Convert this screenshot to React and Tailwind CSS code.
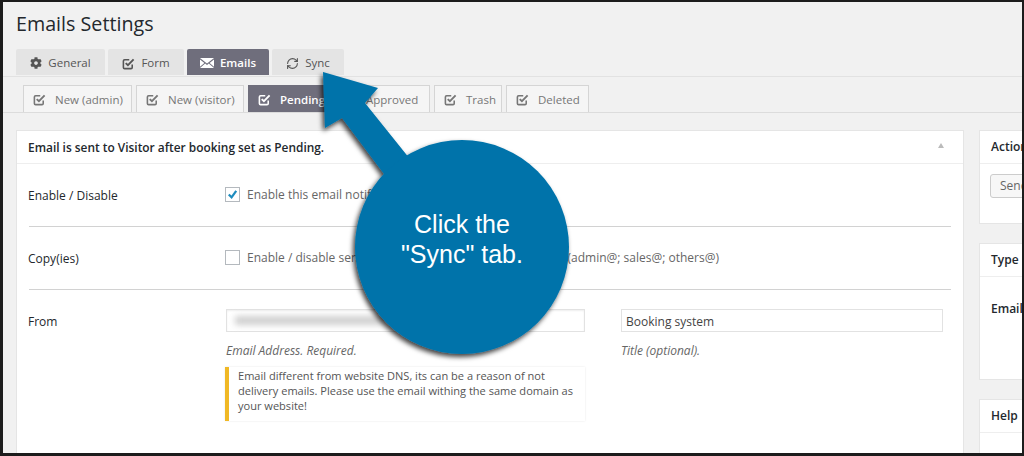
import React from "react";
import { RefreshCw } from "lucide-react";
import { FaCog } from "react-icons/fa";

// glyphicon style "check" box
const CheckIcon = ({ className = "" }) => (
  <svg viewBox="0 0 14 14" className={`w-[13px] h-[13px] ${className}`} fill="none" stroke="currentColor">
    <path d="M11 8v3.2a1.3 1.3 0 0 1-1.3 1.3H2.8a1.3 1.3 0 0 1-1.3-1.3V4.3A1.3 1.3 0 0 1 2.8 3h5" strokeWidth="1.7" />
    <path d="M4 6.5l2.4 2.4L12.5 2.5" strokeWidth="2" />
  </svg>
);

const MailIcon = () => (
  <svg viewBox="0 0 14 10" className="w-[14px] h-[10px]" fill="currentColor">
    <path d="M0 0h14L7 5.6z" />
    <path d="M0 1.4v7.4l4.4-3.9zM14 1.4v7.4L9.6 4.9zM0 10h14L8.8 5.6 7 7 5.2 5.6z" />
  </svg>
);

const mainTabs = [
  { label: "General", icon: <FaCog className="w-[12px] h-[12px]" />, w: "w-[89px]" },
  { label: "Form", icon: <CheckIcon />, w: "w-[76px]" },
  { label: "Emails", icon: <MailIcon />, w: "w-[82px]", active: true },
  { label: "Sync", icon: <RefreshCw className="w-[13px] h-[13px]" strokeWidth={2} />, w: "w-[72px]" },
];

const subTabs = [
  { label: "New (admin)", w: "w-[109px]" },
  { label: "New (visitor)", w: "w-[108px]" },
  { label: "Pending", w: "w-[82px]", active: true },
  { label: "Approved", w: "w-[96px]" },
  { label: "Trash", w: "w-[68px]" },
  { label: "Deleted", w: "w-[83px]" },
];

const Divider = () => <div className="h-px bg-[#d2d2d2] mx-3"></div>;

export default function App() {
  return (
    <div className="relative w-[1024px] h-[456px] overflow-hidden bg-[#f1f1f1] border-t-2 border-l-[3px] border-r-2 border-b-[3px] border-[#1c1c1c] font-['Open_Sans',sans-serif] text-[#444]">
      <h1 className="ml-[13px] pt-[9px] h-[47px] text-[19.7px] leading-[26px] text-[#23282d]">Emails Settings</h1>

      {/* main tabs */}
      <div className="flex ml-[13px] h-[26px] gap-[3px] items-stretch">
        {mainTabs.map((tab) => (
          <div
            key={tab.label}
            className={`${tab.w} flex items-center justify-center gap-[6px] pt-[2px] text-[11.5px] rounded-t-[2px] ${
              tab.active ? "bg-[#6f6e7c] text-white font-semibold" : "bg-[#e4e4e4] text-[#555]"
            }`}
          >
            {tab.icon}
            {tab.label}
          </div>
        ))}
      </div>
      <div className="h-px mt-px bg-[#e2e2e2]"></div>

      {/* sub tabs */}
      <div className="flex pl-5 mt-2 h-[28px] gap-[4px] border-b border-[#dcdcdc]">
        {subTabs.map((tab) => (
          <div
            key={tab.label}
            className={`${tab.w} flex items-center gap-[9px] pl-[9px] pt-px text-[11.5px] border-t border-x ${
              tab.active
                ? "bg-[#6f6e7c] border-[#6f6e7c] text-white font-semibold"
                : "bg-[#f5f5f5] border-[#d5d5d5] text-[#777]"
            }`}
          >
            <CheckIcon />
            {tab.label}
          </div>
        ))}
      </div>

      <div className="flex mt-[17px] ml-[13px] gap-[15px] items-start">
        {/* main panel */}
        <div className="w-[948px] h-[330px] shrink-0 bg-white border border-[#e5e5e5]">
          <div className="relative h-[33px] flex items-center pt-px px-[11px] border-b border-[#eee] text-[11.9px] font-semibold text-[#23282d]">
            Email is sent to Visitor after booking set as Pending.
            <span className="absolute right-[19px] top-[12px] w-0 h-0 border-x-[3px] border-x-transparent border-b-[5px] border-b-[#bbb]"></span>
          </div>

          <div className="flex items-center h-[62px] px-[11px] text-[12px]">
            <div className="w-[197px] pt-[2px] text-[#23282d]">Enable / Disable</div>
            <div className="flex items-center gap-[7px] -mt-[1px] text-[#666]">
              <div className="w-[15px] h-[15px] -mt-px flex items-center justify-center border border-[#b4b9be] bg-white">
                <svg viewBox="0 0 14 14" className="w-[13px] h-[13px]" fill="none" stroke="#1e8cbe" strokeWidth="2.4">
                  <path d="M3 7l3 3 5-7" />
                </svg>
              </div>
              Enable this email notification
            </div>
          </div>
          <Divider />

          <div className="flex items-center h-[62px] px-[11px] text-[12px]">
            <div className="w-[197px] pt-[2px] text-[#23282d]">Copy(ies)</div>
            <div className="flex items-center gap-[7px] -mt-[1px] text-[#666]">
              <div className="w-[15px] h-[15px] -mt-px border border-[#b4b9be] bg-white"></div>
              Enable / disable sending copy of this email to other mails (admin@; sales@; others@)
            </div>
          </div>
          <Divider />

          <div className="flex px-[11px] pt-[19px] text-[12px]">
            <div className="w-[198px] pt-[4px] text-[#23282d]">From</div>
            <div className="w-[359px]">
              <div className="h-[23px] flex items-center px-2 bg-white border border-[#e2e2e2] shadow-[inset_0_1px_2px_rgba(0,0,0,0.07)]">
                <div className="w-[150px] h-[9px] bg-[#cfcfcf] blur-[3px]"></div>
              </div>
              <div className="mt-[11px] italic text-[12px] leading-[16px] text-[#666]">Email Address. Required.</div>
              <div className="-ml-px mt-2 h-[54px] pl-[9px] pr-1 py-[1px] border-l-4 border-[#f0b825] shadow-[0_0_2px_rgba(0,0,0,0.1)] text-[11.05px] leading-[15px] text-[#555]">
                Email different from website DNS, its can be a reason of not delivery emails. Please use the email withing the same domain as your website!
              </div>
            </div>
            <div className="w-[322px] ml-9">
              <div className="h-[23px] flex items-center px-[4px] pt-[2px] bg-white border border-[#e2e2e2] text-[#444]">Booking system</div>
              <div className="mt-[11px] italic text-[12px] leading-[16px] text-[#666]">Title (optional).</div>
            </div>
          </div>
        </div>

        {/* side column */}
        <div className="w-[120px] shrink-0 flex flex-col gap-[19px] text-[12px] text-[#23282d]">
          <div className="h-[94px] bg-white border border-[#e5e5e5]">
            <div className="h-[33px] flex items-center px-[11px] border-b border-[#eee] font-semibold">Actions</div>
            <div className="ml-[10px] mt-[10px] w-[80px] h-[24px] flex items-center px-[9px] text-[#666] bg-[#f7f7f7] border border-[#ccc] rounded-[3px]">Send test</div>
          </div>
          <div className="h-[137px] bg-white border border-[#e5e5e5]">
            <div className="h-[33px] flex items-center px-[11px] border-b border-[#eee] font-semibold">Type</div>
            <div className="px-[11px] pt-[23px] font-semibold">Email</div>
          </div>
          <div className="h-[60px] bg-white border border-[#e5e5e5]">
            <div className="h-[33px] flex items-center px-[11px] border-b border-[#eee] font-semibold">Help</div>
          </div>
        </div>
      </div>

      {/* callout arrow and bubble, drawn over the page */}
      <svg className="absolute -left-[3px] -top-[2px] w-[1024px] h-[456px] pointer-events-none" viewBox="0 0 1024 456">
        <defs>
          <filter id="drop" x="-20%" y="-20%" width="140%" height="140%">
            <feDropShadow dx="-2" dy="3" stdDeviation="2.5" floodColor="#000" floodOpacity="0.75" />
          </filter>
        </defs>
        <g filter="url(#drop)" fill="#0073aa">
          <path d="M323 72L378 88L365 103L430 184L390 182L342 118L325 128Z" />
          <circle cx="462" cy="247" r="107" />
        </g>
      </svg>
      <div className="absolute left-[352px] top-[207px] w-[214px] text-center font-['Liberation_Sans',sans-serif] text-[25px] leading-[30px] text-white">
        Click the
        <br />
        "Sync" tab.
      </div>
    </div>
  );
}
